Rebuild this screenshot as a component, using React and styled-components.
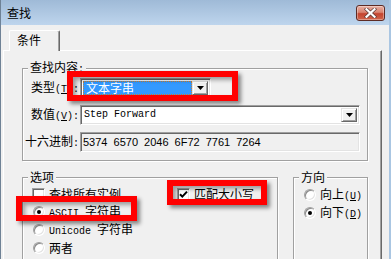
import React from 'react';
import styled, { createGlobalStyle } from 'styled-components';

const cjk = `"Noto Sans CJK SC", "Noto Sans CJK JP", sans-serif`;

const Global = createGlobalStyle`
  html, body { margin: 0; padding: 0; background: #f0f0f0; }
  body { font-family: ${cjk}; font-size: 12px; color: #000; }
  * { box-sizing: border-box; }
`;

const Window = styled.div`
  width: 391px;
  height: 259px;
  overflow: hidden;
  background: #f0f0f0;
  border-left: 1px solid #6f8296;
  border-right: 2px solid #aac6e2;
`;

const TitleBar = styled.div`
  height: 25px;
  display: flex;
  align-items: flex-start;
  justify-content: space-between;
  padding: 0 4px 0 6px;
  background: linear-gradient(#9fbad7, #bed5ed);
`;

const Title = styled.div`
  margin-top: 6px;
  line-height: 14px;
  font-size: 12px;
`;

const CloseButton = styled.div`
  margin-top: 5px;
  width: 29px;
  height: 16px;
  border: 1px solid #5e2b24;
  border-radius: 3px;
  background: linear-gradient(#e8b0a3 0%, #d98370 45%, #c4442f 55%, #d0654b 100%);
  box-shadow: inset 0 0 0 1px rgba(255, 255, 255, 0.35);
  display: flex;
  align-items: center;
  justify-content: center;
`;

const Body = styled.div`
  padding: 5px 7px 0 2px;
`;

const TabStrip = styled.div`
  display: flex;
  padding-left: 6px;
  position: relative;
  z-index: 1;
`;

const Tab = styled.div`
  width: 51px;
  height: 21px;
  margin-bottom: -1px;
  background: #f0f0f0;
  border-top: 1px solid #fff;
  border-left: 1px solid #fff;
  border-right: 1px solid #696969;
  box-shadow: inset -1px 0 0 #a0a0a0;
  border-radius: 2px 2px 0 0;
  padding: 2px 0 0 7px;
  line-height: 14px;
`;

const Panel = styled.div`
  height: 260px;
  border: 1px solid;
  border-color: #fff #696969 #696969 #fff;
  box-shadow: inset -1px -1px 0 #a0a0a0;
  padding: 9px 13px 0 18px;
`;

const Group = styled.fieldset`
  margin: 0;
  padding: 0;
  min-width: 0;
  border: 1px solid #a0a0a0;
  box-shadow: inset 1px 1px 0 #fff, 1px 1px 0 #fff;
  width: ${(p) => (p.$w ? `${p.$w}px` : 'auto')};
  flex: ${(p) => (p.$w ? 'none' : '1')};
  height: ${(p) => (p.$h ? `${p.$h}px` : 'auto')};
`;

const Legend = styled.legend`
  margin-left: 5px;
  padding: 0 2px;
  line-height: 14px;
  font-size: 12px;
  background: #f0f0f0;
`;

const L = styled.span`
  font-family: "Liberation Mono", monospace;
  font-size: 10px;
`;

const FieldGrid = styled.div`
  display: grid;
  grid-template-columns: 57px 1fr;
  grid-auto-rows: 20px;
  row-gap: 7px;
  padding: 1px 7px 8px 0;
  align-items: center;
`;

const Label = styled.div`
  text-align: right;
  padding-right: 1px;
  line-height: 14px;
  white-space: nowrap;
`;

const Annotated = styled.div`
  position: relative;
  display: flex;
  align-items: center;
  justify-self: start;
`;

const Annot = styled.span`
  position: absolute;
  z-index: 3;
  top: ${(p) => -p.$t}px;
  left: ${(p) => -p.$l}px;
  right: ${(p) => -p.$r}px;
  bottom: ${(p) => -p.$b}px;
  border: 6px solid #ff0000;
  box-shadow: 3px 3px 4px rgba(0, 0, 0, 0.45), inset 3px 3px 4px rgba(0, 0, 0, 0.35);
  pointer-events: none;
`;

const Sunken = styled.div`
  height: 20px;
  border: 1px solid;
  border-color: #a0a0a0 #fff #fff #a0a0a0;
  box-shadow: inset 1px 1px 0 #696969, inset -1px -1px 0 #e3e3e3;
`;

const Combo = styled(Sunken)`
  width: ${(p) => (p.$w ? `${p.$w}px` : '100%')};
  background: #fff;
  display: flex;
  align-items: stretch;
  padding: 2px;
`;

const ComboValue = styled.div`
  flex: 1;
  display: flex;
  align-items: center;
  padding-left: ${(p) => (p.$selected ? '0' : '1px')};
  line-height: 14px;
  white-space: nowrap;
`;

const Selection = styled.div`
  flex: 1;
  align-self: stretch;
  background: #3399ff;
  color: #fff;
  border: 1px dotted #d08030;
  padding-left: 2px;
  display: flex;
  align-items: center;
  line-height: 12px;
`;

const DropButton = styled.div`
  width: 16px;
  flex: none;
  background: #f0f0f0;
  border: 1px solid;
  border-color: #e3e3e3 #696969 #696969 #e3e3e3;
  box-shadow: inset 1px 1px 0 #fff, inset -1px -1px 0 #a0a0a0;
  display: flex;
  align-items: center;
  justify-content: center;
`;

const HexField = styled(Sunken)`
  background: #f0f0f0;
  padding: 0 0 0 2px;
  display: flex;
  align-items: center;
  font-family: "Liberation Sans", sans-serif;
  font-size: 11px;
  word-spacing: 3px;
  white-space: nowrap;
`;

const BottomRow = styled.div`
  display: flex;
  gap: 15px;
  margin-top: 9px;
`;

const OptionsGrid = styled.div`
  display: grid;
  grid-template-columns: 145px auto;
  grid-auto-rows: 14px;
  row-gap: 4px;
  padding: 3px 0 0 9px;
  justify-items: start;
`;

const DirList = styled.div`
  display: flex;
  flex-direction: column;
  gap: 4px;
  padding: 4px 0 0 9px;
`;

const Item = styled.div`
  display: flex;
  align-items: center;
  gap: 4px;
  height: 14px;
  line-height: 14px;
  white-space: nowrap;
`;

const Box = styled.span`
  width: 13px;
  height: 13px;
  flex: none;
  background: #fff;
  border: 1px solid;
  border-color: #a0a0a0 #fff #fff #a0a0a0;
  box-shadow: inset 1px 1px 0 #696969, inset -1px -1px 0 #e3e3e3;
  display: flex;
  align-items: center;
  justify-content: center;
`;

const Radio = styled.span`
  width: 12px;
  height: 12px;
  margin-left: 1px;
  flex: none;
  border-radius: 50%;
  background: #fff;
  border: 1px solid;
  border-color: #a0a0a0 #fff #fff #a0a0a0;
  box-shadow: inset 1px 1px 0 #8a8a8a, inset -1px -1px 0 #e3e3e3;
  display: flex;
  align-items: center;
  justify-content: center;
  &::after {
    content: '';
    width: 4px;
    height: 4px;
    border-radius: 50%;
    background: ${(p) => (p.$on ? '#000' : 'transparent')};
  }
`;

const Arrow = () => (
  <svg width="7" height="4" viewBox="0 0 7 4">
    <path d="M0 0H7L3.5 4Z" fill="#000" />
  </svg>
);

const Check = () => (
  <svg width="9" height="9" viewBox="0 0 9 9">
    <path d="M1 4.2L3.3 6.6L8 1.6" fill="none" stroke="#000" strokeWidth="2" />
  </svg>
);

const CloseX = () => (
  <svg width="13" height="10" viewBox="0 0 13 10">
    <path d="M2.5 1.2L10.5 8.8M10.5 1.2L2.5 8.8" stroke="#5a3a36" strokeWidth="3.6" strokeLinecap="square" />
    <path d="M2.5 1.2L10.5 8.8M10.5 1.2L2.5 8.8" stroke="#fff" strokeWidth="2.2" strokeLinecap="square" />
  </svg>
);

export default function App() {
  return (
    <>
      <Global />
      <Window>
        <TitleBar>
          <Title>查找</Title>
          <CloseButton>
            <CloseX />
          </CloseButton>
        </TitleBar>
        <Body>
          <TabStrip>
            <Tab>条件</Tab>
          </TabStrip>
          <Panel>
            <Group>
              <Legend>查找内容<L>:</L></Legend>
              <FieldGrid>
                <Label>
                  类型<L>(<u>T</u>):</L>
                </Label>
                <Annotated>
                  <Combo $w={131}>
                    <ComboValue $selected>
                      <Selection>文本字串</Selection>
                    </ComboValue>
                    <DropButton>
                      <Arrow />
                    </DropButton>
                  </Combo>
                  <Annot $t={7} $l={13} $r={27} $b={3} />
                </Annotated>
                <Label>
                  数值<L>(<u>V</u>):</L>
                </Label>
                <Combo>
                  <ComboValue>
                    <L>Step Forward</L>
                  </ComboValue>
                  <DropButton>
                    <Arrow />
                  </DropButton>
                </Combo>
                <Label>
                  十六进制<L>:</L>
                </Label>
                <HexField>5374 6570 2046 6F72 7761 7264</HexField>
              </FieldGrid>
            </Group>
            <BottomRow>
              <Group $w={256} $h={110}>
                <Legend>选项</Legend>
                <OptionsGrid>
                  <Item>
                    <Box />
                    查找所有实例
                  </Item>
                  <Annotated>
                    <Item>
                      <Box>
                        <Check />
                      </Box>
                      匹配大小写
                    </Item>
                    <Annot $t={7} $l={10} $r={13} $b={4} />
                  </Annotated>
                  <Annotated>
                    <Item>
                      <Radio $on />
                      <span>
                        <L>ASCII </L>字符串
                      </span>
                    </Item>
                    <Annot $t={9} $l={16} $r={16} $b={2} />
                  </Annotated>
                  <span />
                  <Item>
                    <Radio />
                    <span>
                      <L>Unicode </L>字符串
                    </span>
                  </Item>
                  <span />
                  <Item>
                    <Radio />
                    两者
                  </Item>
                </OptionsGrid>
              </Group>
              <Group $h={110}>
                <Legend>方向</Legend>
                <DirList>
                  <Item>
                    <Radio />
                    <span>
                      向上<L>(<u>U</u>)</L>
                    </span>
                  </Item>
                  <Item>
                    <Radio $on />
                    <span>
                      向下<L>(<u>D</u>)</L>
                    </span>
                  </Item>
                </DirList>
              </Group>
            </BottomRow>
          </Panel>
        </Body>
      </Window>
    </>
  );
}
